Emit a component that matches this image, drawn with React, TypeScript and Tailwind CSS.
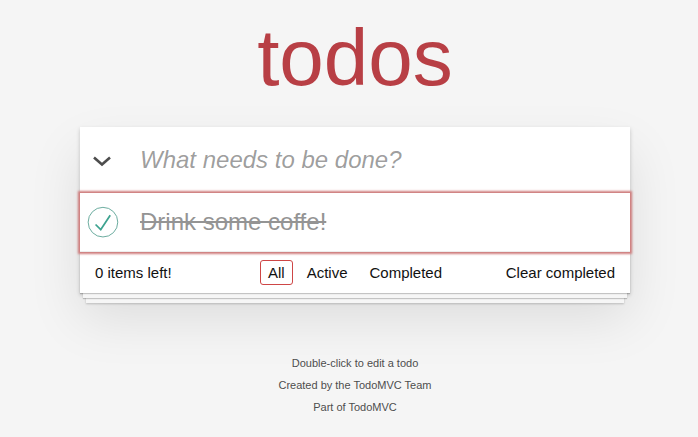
import React from "react";

export default function App() {
  return (
    <div
      className="min-h-[437px] w-full bg-[#f5f5f5] text-[#111] flex justify-center pl-[12px]"
      style={{ fontFamily: '"Liberation Sans", Arial, sans-serif' }}
    >
      <div className="w-[550px] flex flex-col pt-[18px]">
        <h1 className="h-[80px] leading-[80px] text-[80px] font-extralight text-[#b83f45] text-center">
          todos
        </h1>
        <div className="mt-[29px] bg-white shadow-[0_2px_4px_rgba(0,0,0,0.2),0_25px_50px_rgba(0,0,0,0.1)]">
          <div className="flex h-[65px] items-center">
            <div className="w-[60px] h-full flex items-center justify-start pl-[12px] pt-[3px]">
              <svg width="20" height="12" viewBox="0 0 20 12">
                <path d="M2 2.5 L10 9.5 L18 2.5" fill="none" stroke="#4d4d4d" strokeWidth="2.6" strokeLinecap="butt" strokeLinejoin="miter" />
              </svg>
            </div>
            <input
              className="flex-1 h-full pr-4 text-[24px] outline-none bg-transparent placeholder:italic placeholder:text-[rgba(0,0,0,0.4)]"
              placeholder="What needs to be done?"
            />
          </div>
          <div className="border-t border-[#e6e6e6]">
            <div className="relative z-10 flex items-center h-[59px] border-b border-[#ededed] shadow-[0_0_2px_2px_#cf7d7d]">
              <div className="w-[60px] h-full flex items-center">
                <svg width="40" height="40" viewBox="-10 -18 100 135">
                  <circle cx="50" cy="50" r="50" fill="none" stroke="#59A193" strokeWidth="3" />
                  <path fill="#3EA390" d="M72 25L42 71 27 56l-4 4 20 20 34-52z" />
                </svg>
              </div>
              <span className="text-[24px] leading-[1.2] text-[#949494] line-through">
                Drink some coffe!
              </span>
            </div>
          </div>
          <div className="h-[41px] border-t border-[#e6e6e6] px-[15px] grid grid-cols-[1fr_auto_1fr] items-center text-[15px] shadow-[0_1px_1px_rgba(0,0,0,0.2),0_8px_0_-3px_#f6f6f6,0_9px_1px_-3px_rgba(0,0,0,0.2),0_16px_0_-6px_#f6f6f6,0_17px_2px_-6px_rgba(0,0,0,0.2)]">
            <span className="justify-self-start">0 items left!</span>
            <ul className="flex items-center">
              <li>
                <a className="m-[3px] px-[7px] py-[3px] border border-[#ce4646] rounded-[3px]">All</a>
              </li>
              <li>
                <a className="m-[3px] px-[7px] py-[3px] border border-transparent rounded-[3px]">Active</a>
              </li>
              <li>
                <a className="m-[3px] px-[7px] py-[3px] border border-transparent rounded-[3px]">Completed</a>
              </li>
            </ul>
            <span className="justify-self-end">Clear completed</span>
          </div>
        </div>
        <div className="mt-[65px] flex flex-col items-center gap-[11px] text-[11px] leading-none text-[#4d4d4d] [text-shadow:0_1px_0_rgba(255,255,255,0.5)]">
          <p>Double-click to edit a todo</p>
          <p>Created by the TodoMVC Team</p>
          <p>Part of TodoMVC</p>
        </div>
      </div>
    </div>
  );
}
